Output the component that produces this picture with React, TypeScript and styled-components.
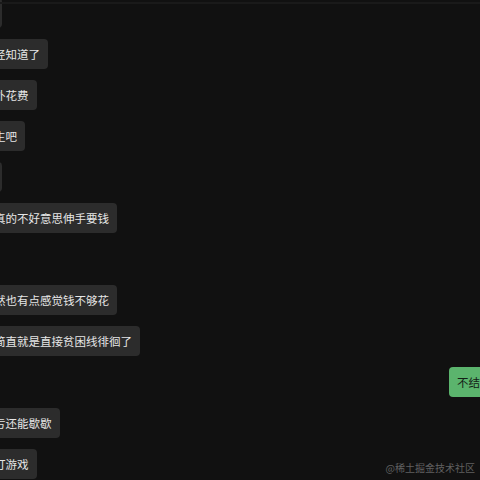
import React from "react";
import styled, { createGlobalStyle } from "styled-components";

type Message = { side: "in" | "out"; text: string };

const messages: Message[] = [
  { side: "in", text: "嗯" },
  { side: "in", text: "已经知道了" },
  { side: "in", text: "额外花费" },
  { side: "in", text: "先生吧" },
  { side: "in", text: "好" },
  { side: "in", text: "我真的不好意思伸手要钱" },
  { side: "out", text: "嗯" },
  { side: "in", text: "虽然也有点感觉钱不够花" },
  { side: "in", text: "这简直就是直接贫困线徘徊了" },
  { side: "out", text: "不结婚吗" },
  { side: "in", text: "幸亏还能歇歇" },
  { side: "in", text: "去打游戏" },
];

const GlobalStyle = createGlobalStyle`
  html, body {
    margin: 0;
    padding: 0;
    background: #111111;
    overflow: hidden;
  }
  body {
    font-family: "Noto Sans CJK SC", "Noto Sans", sans-serif;
  }
`;

const Screen = styled.div`
  position: relative;
  width: 480px;
  height: 480px;
  overflow: hidden;
  background: #111111;
`;

const TopEdge = styled.div`
  position: absolute;
  top: 2px;
  left: 0;
  right: 0;
  height: 2px;
  background: #1a1a1a;
`;

const Thread = styled.div`
  display: flex;
  flex-direction: column;
  gap: 11px;
  width: 536.5px;
  margin: -2px 0 0 -25.5px;
`;

const Row = styled.div<{ $side: "in" | "out" }>`
  display: flex;
  justify-content: ${(p) => (p.$side === "out" ? "flex-end" : "flex-start")};
`;

const Bubble = styled.div<{ $side: "in" | "out" }>`
  padding: 8px;
  border-radius: 4px;
  font-size: 11.5px;
  line-height: 14px;
  white-space: nowrap;
  background: ${(p) => (p.$side === "out" ? "#5bb46d" : "#2c2c2c")};
  color: ${(p) => (p.$side === "out" ? "#142016" : "#e6e6e6")};
`;

const Watermark = styled.div`
  position: absolute;
  right: 5px;
  bottom: 6px;
  font-size: 10px;
  line-height: 12px;
  color: #606060;
  font-family: "Noto Sans CJK SC", serif;
`;

export default function App() {
  return (
    <>
      <GlobalStyle />
      <Screen>
        <Thread>
          {messages.map((m, i) => (
            <Row key={i} $side={m.side}>
              <Bubble $side={m.side}>{m.text}</Bubble>
            </Row>
          ))}
        </Thread>
        <TopEdge />
        <Watermark>@稀土掘金技术社区</Watermark>
      </Screen>
    </>
  );
}
